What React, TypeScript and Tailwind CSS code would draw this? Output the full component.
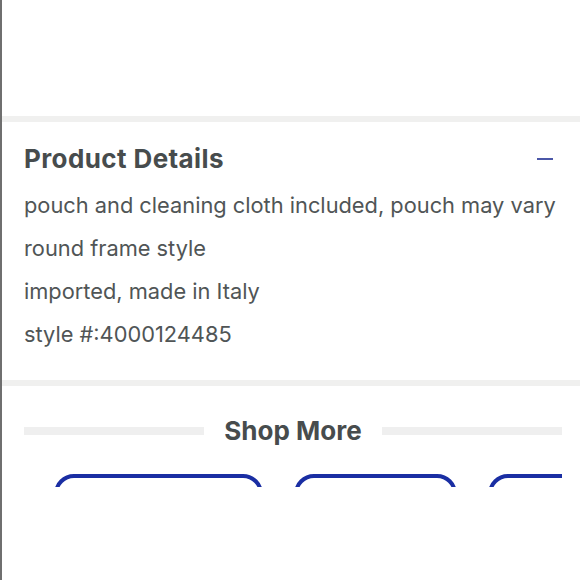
import React from "react";

const details = [
  "pouch and cleaning cloth included, pouch may vary",
  "round frame style",
  "imported, made in Italy",
  "style #:4000124485",
];

const pills = ["w-[209px]", "w-[163px]", "w-[180px]"];

export default function App() {
  return (
    <div className="h-[580px] w-[580px] overflow-hidden border-l-2 border-[#6f6f6f] bg-white font-['Inter',sans-serif]">
      {/* top blank area */}
      <div className="h-[116px]" />
      <div className="h-[6px] bg-[#f0f0ef]" />

      {/* ── Product Details ── */}
      <section className="pl-[22px] pr-[26px] pt-[24px] pb-[24px]">
        <div className="flex items-center justify-between h-[26px]">
          <h2 className="text-[26px] font-bold leading-none tracking-[0.4px] text-[#474c4d]">Product Details</h2>
          <span className="block h-[2.5px] w-4 bg-[#4b57a8] mr-[1px]" />
        </div>
        <ul className="mt-[12px] whitespace-nowrap text-[21.8px] leading-[43px] text-[#505556]">
          {details.map((d) => (
            <li key={d}>{d}</li>
          ))}
        </ul>
      </section>

      <div className="h-[6px] bg-[#f0f0ef]" />

      {/* ── Shop More ── */}
      <div className="flex items-center gap-5 pl-[22px] pr-[18px] pt-[32px]">
        <div className="h-2 flex-1 bg-[#efefef]" />
        <h3 className="text-[26px] font-bold leading-none tracking-[0px] text-[#474c4d]">Shop More</h3>
        <div className="h-2 flex-1 bg-[#efefef]" />
      </div>

      <div className="mt-[30px] ml-[52px] mr-[18px] h-[13px] overflow-hidden">
        <div className="flex gap-[31px]">
          {pills.map((w) => (
            <div key={w} className={`${w} h-10 shrink-0 rounded-[22px] border-[4px] border-[#1a2ea3]`} />
          ))}
        </div>
      </div>
    </div>
  );
}
